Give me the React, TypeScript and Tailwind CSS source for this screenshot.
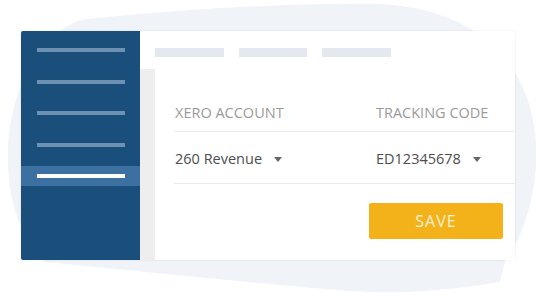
import React from "react";

export default function App() {
  const font = { fontFamily: '"Open Sans", "Noto Sans", sans-serif' };
  return (
    <div className="relative w-[540px] h-[295px] bg-white overflow-hidden" style={font}>
      <svg className="absolute inset-0" width="540" height="295" viewBox="0 0 540 295">
        <path
          d="M 80 20 C 170 10 300 2 380 4 C 460 8 515 45 532 115 C 545 175 525 235 505 262 L 500 282 C 440 292 390 294 350 291 C 250 283 150 272 45 262 C 18 235 6 195 8 145 C 12 85 40 35 80 20 Z"
          fill="#f0f3f7"
        />
      </svg>
      <div className="relative ml-[21px] mt-[31px] w-[494px] h-[229px] flex bg-white rounded-[2px] shadow-[0_0_3px_rgba(0,0,0,0.08)]">
        {/* Sidebar */}
        <div className="w-[119px] h-full bg-[#1b4f7b] rounded-l-[2px] flex flex-col pt-[9px] gap-[11.5px]">
          {[0, 1, 2, 3].map((i) => (
            <div key={i} className="h-[20px] flex items-center pl-[16px]">
              <div className="w-[88px] h-[4px] bg-[#6c91b3]" />
            </div>
          ))}
          <div className="h-[20px] flex items-center pl-[16px] bg-[#3b70a0]">
            <div className="w-[88px] h-[4px] bg-white" />
          </div>
        </div>
        {/* Main */}
        <div className="flex-1 flex flex-col">
          <div className="h-[38px] flex items-start pt-[17px] pl-[15px] gap-[15px]">
            <div className="w-[69px] h-[9px] bg-[#e3e9ee]" />
            <div className="w-[68px] h-[9px] bg-[#e3e9ee]" />
            <div className="w-[69px] h-[9px] bg-[#e3e9ee]" />
          </div>
          <div className="flex-1 flex">
            <div className="w-[15px] bg-[#eeeeee]" />
            <div className="flex-1 flex flex-col pl-[19px]">
              <div className="h-[62px] flex items-end pb-[8px] text-[14.5px] leading-[20px] text-[#9a9a9a]">
                <div className="w-[202px] pl-[1px]">XERO ACCOUNT</div>
                <div>TRACKING CODE</div>
              </div>
              <div className="h-px bg-[#e9ecef]" />
              <div className="h-[51px] flex items-center pt-[3px] text-[14.5px] leading-[20px] text-[#4d4d4d]">
                <div className="w-[202px] pl-[1px] flex items-center">
                  <span>260 Revenue</span>
                  <span className="ml-[12px] w-0 h-0 border-l-[4px] border-r-[4px] border-t-[5px] border-l-transparent border-r-transparent border-t-[#666]" />
                </div>
                <div className="flex items-center">
                  <span>ED12345678</span>
                  <span className="ml-[12px] w-0 h-0 border-l-[4px] border-r-[4px] border-t-[5px] border-l-transparent border-r-transparent border-t-[#666]" />
                </div>
              </div>
              <div className="h-px bg-[#e9ecef]" />
              <div className="flex justify-end pr-[12px] pt-[19px]">
                <div className="w-[134px] h-[36px] bg-[#f3b219] rounded-[2px] flex items-center justify-center text-[16px] tracking-[1px] text-[#fdf1d2]">
                  SAVE
                </div>
              </div>
            </div>
          </div>
        </div>
      </div>
    </div>
  );
}
